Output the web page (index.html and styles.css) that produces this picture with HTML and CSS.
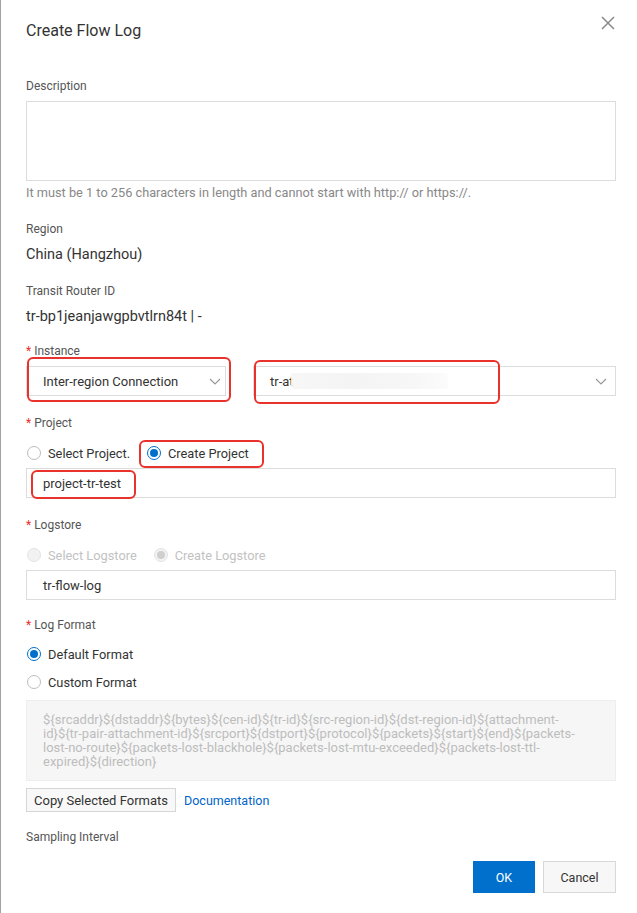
FILE: index.html
```html
<!DOCTYPE html>
<html lang="en">
<head>
<meta charset="utf-8">
<title>Create Flow Log</title>
<link rel="stylesheet" href="styles.css">
</head>
<body>
<div class="dialog">
  <div class="header">
    <div class="title">Create Flow Log</div>
    <svg class="close" width="14" height="14" viewBox="0 0 14 14"><path d="M1 1L13 13M13 1L1 13" stroke="#8a8a8a" stroke-width="1.5" fill="none"/></svg>
  </div>

  <div class="form">
    <div class="item item-desc">
      <div class="label">Description</div>
      <div class="textarea"></div>
      <div class="help">It must be 1 to 256 characters in length and cannot start with http:// or https://.</div>
    </div>

    <div class="item item-static item-region">
      <div class="label">Region</div>
      <div class="value">China (Hangzhou)</div>
    </div>

    <div class="item item-static">
      <div class="label">Transit Router ID</div>
      <div class="value">tr-bp1jeanjawgpbvtlrn84t | -</div>
    </div>

    <div class="item">
      <div class="label"><span class="req">*</span> Instance</div>
      <div class="select-row">
        <div class="select select-a">
          <span class="sel-text">Inter-region Connection</span>
          <svg class="chev" width="12" height="7" viewBox="0 0 12 7"><path d="M1 1L6 6L11 1" stroke="#999" stroke-width="1.2" fill="none"/></svg>
          <span class="annot annot-a"></span>
        </div>
        <div class="select select-b">
          <span class="sel-text">tr-at<span class="blur"></span></span>
          <svg class="chev" width="12" height="7" viewBox="0 0 12 7"><path d="M1 1L6 6L11 1" stroke="#999" stroke-width="1.2" fill="none"/></svg>
          <span class="annot annot-b"></span>
        </div>
      </div>
    </div>

    <div class="item">
      <div class="label"><span class="req">*</span> Project</div>
      <div class="radio-row">
        <label class="radio"><span class="dot"></span><span>Select Project.</span></label>
        <label class="radio checked annotated"><span class="dot"></span><span>Create Project</span><span class="annot annot-c"></span></label>
      </div>
      <div class="input"><span>project-tr-test</span><span class="annot annot-d"></span></div>
    </div>

    <div class="item item-logstore">
      <div class="label"><span class="req">*</span> Logstore</div>
      <div class="radio-row">
        <label class="radio disabled"><span class="dot"></span><span>Select Logstore</span></label>
        <label class="radio disabled checked"><span class="dot"></span><span>Create Logstore</span></label>
      </div>
      <div class="input"><span>tr-flow-log</span></div>
    </div>

    <div class="item item-format">
      <div class="label"><span class="req">*</span> Log Format</div>
      <div class="radio-col">
        <label class="radio checked"><span class="dot"></span><span>Default Format</span></label>
        <label class="radio"><span class="dot"></span><span>Custom Format</span></label>
      </div>
      <div class="format-box">
        <span class="fl">${srcaddr}${dstaddr}${bytes}${cen-id}${tr-id}${src-region-id}${dst-region-id}${attachment-</span>
        <span class="fl">id}${tr-pair-attachment-id}${srcport}${dstport}${protocol}${packets}${start}${end}${packets-</span>
        <span class="fl">lost-no-route}${packets-lost-blackhole}${packets-lost-mtu-exceeded}${packets-lost-ttl-</span>
        <span class="fl">expired}${direction}</span>
      </div>
      <div class="actions">
        <button class="btn btn-small">Copy Selected Formats</button>
        <a class="link">Documentation</a>
      </div>
    </div>

    <div class="label sampling">Sampling Interval</div>
  </div>

  <div class="footer">
    <button class="btn btn-primary">OK</button>
    <button class="btn btn-normal">Cancel</button>
  </div>
</div>
</body>
</html>
```

FILE: styles.css
```css
html, body {
  margin: 0;
  padding: 0;
  background: #fff;
}

body {
  font-family: Roboto, "Helvetica Neue", Arial, sans-serif;
  color: #333;
}

.dialog {
  box-sizing: border-box;
  min-height: 913px;
  border-left: 1px solid #a3a3a3;
  padding: 21px 21px 0 25px;
}

.header {
  display: flex;
  justify-content: space-between;
  align-items: flex-start;
  height: 20px;
}

.title {
  font-size: 16px;
  line-height: 20px;
  color: #333;
}

.close {
  margin-top: -5px;
  margin-right: 1px;
}

.form {
  margin-top: 36px;
}

.item {
  margin-bottom: 18px;
}

.item-desc {
  margin-bottom: 19px;
}

.item-static {
  margin-bottom: 15px;
}

.item-static.item-region {
  margin-bottom: 17px;
}

.item-logstore {
  margin-bottom: 16px;
}

.label {
  font-size: 12px;
  line-height: 18px;
  color: #555;
  margin-bottom: 6px;
}

.req {
  color: #e62e2e;
}

.textarea {
  height: 78px;
  border: 1px solid #dcdcdc;
}

.help {
  margin-top: 4px;
  font-size: 12.75px;
  line-height: 16px;
  color: #888;
}

.value {
  font-size: 14.5px;
  line-height: 21px;
  color: #333;
}

.select-row {
  display: flex;
  gap: 27px;
}

.select {
  position: relative;
  box-sizing: border-box;
  height: 30px;
  border: 1px solid #dcdcdc;
  display: flex;
  align-items: center;
  justify-content: space-between;
  padding: 0 8px 0 16px;
  font-size: 13px;
  color: #333;
}

.select-a {
  width: 200px;
  padding-right: 4px;
}

.select-b {
  flex: 1;
}

.sel-text {
  display: flex;
  align-items: center;
}

.blur {
  display: inline-block;
  width: 157px;
  height: 16px;
  margin-left: -3px;
  border-radius: 3px;
  background: linear-gradient(90deg, rgba(246,246,246,0.9), #f4f4f4 40%, #f7f7f7 80%, rgba(251,251,251,0.9));
}

.annot {
  position: absolute;
  border: 2px solid #e8322b;
  border-radius: 6px;
  pointer-events: none;
}

.annot-a {
  left: 0;
  top: -10px;
  right: -6px;
  bottom: -7px;
}

.annot-b {
  left: 0;
  top: -7px;
  width: 242px;
  bottom: -9px;
}

.annot-c {
  left: -7px;
  right: -15px;
  top: 2px;
  bottom: 0;
}

.annot-d {
  left: 4px;
  top: 1px;
  width: 101px;
  bottom: -2px;
}

.radio-row {
  display: flex;
  align-items: stretch;
  height: 30px;
}

.radio-col {
  display: flex;
  flex-direction: column;
}

.radio-col .radio {
  height: 28px;
}

.radio {
  position: relative;
  display: flex;
  align-items: center;
  gap: 7px;
  margin-right: 16px;
  padding-left: 1px;
  font-size: 12.8px;
  color: #333;
}

.dot {
  box-sizing: border-box;
  width: 14px;
  height: 14px;
  border-radius: 50%;
  border: 1px solid #bcbcbc;
  background: #fff;
  display: flex;
  align-items: center;
  justify-content: center;
}

.radio.checked .dot {
  border-color: #0070cc;
}

.radio.checked .dot::after {
  content: "";
  width: 8px;
  height: 8px;
  border-radius: 50%;
  background: #0070cc;
}

.radio.disabled {
  color: #c2c2c2;
}

.radio.disabled .dot {
  border-color: #e3e3e3;
  background: #f2f2f2;
}

.radio.disabled.checked .dot::after {
  background: #cfcfcf;
}

.input {
  position: relative;
  box-sizing: border-box;
  height: 30px;
  border: 1px solid #dcdcdc;
  display: flex;
  align-items: center;
  padding-left: 16px;
  font-size: 13px;
  color: #333;
}

.format-box {
  margin-top: 4px;
  box-sizing: border-box;
  height: 81px;
  background: #f6f6f6;
  border: 1px solid #eeeeee;
  padding: 12px 6px 0 16px;
  font-size: 13px;
  line-height: 14px;
  color: #bdbdbd;
}

.fl {
  display: block;
  white-space: nowrap;
}

.actions {
  margin-top: 7px;
  display: flex;
  align-items: center;
  gap: 8px;
}

.btn {
  font-family: Roboto, "Helvetica Neue", Arial, sans-serif;
  font-size: 12.5px;
  cursor: pointer;
  box-sizing: border-box;
  margin: 0;
}

.btn-small {
  width: 150px;
  height: 24px;
  padding: 0 4px;
  font-size: 13px;
  background: #f8f8f8;
  border: 1px solid #d6d6d6;
  color: #333;
}

.link {
  font-size: 12.5px;
  color: #0064c8;
}

.item-format {
  margin-bottom: 16px;
}

.sampling {
  margin-bottom: 0;
}

.footer {
  margin-top: 15px;
  display: flex;
  justify-content: flex-end;
  gap: 8px;
}

.btn-primary {
  width: 62px;
  height: 32px;
  background: #0070cc;
  border: 1px solid #0070cc;
  color: #fff;
}

.btn-normal {
  width: 73px;
  height: 32px;
  background: #f7f7f7;
  border: 1px solid #d8d8d8;
  color: #333;
}
```
